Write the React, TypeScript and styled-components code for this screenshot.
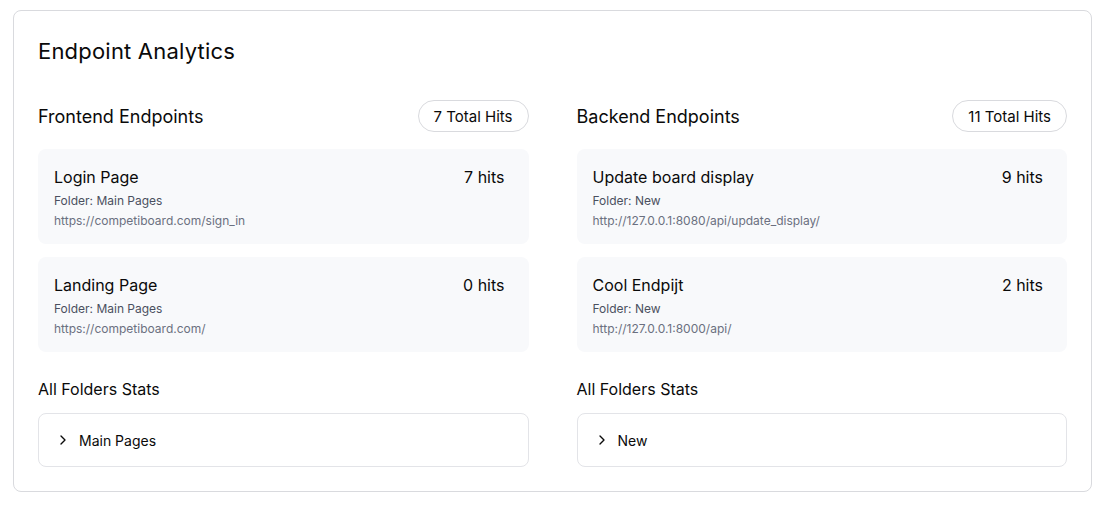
import React from "react";
import styled, { createGlobalStyle } from "styled-components";

const Global = createGlobalStyle`
  html, body { margin: 0; padding: 0; background: #ffffff; }
  body { font-family: Inter, "Noto Sans", sans-serif; color: #0a0a0a; -webkit-font-smoothing: antialiased; }
  * { box-sizing: border-box; }
`;

const Page = styled.div`
  padding: 10px 18px 14px 13px;
`;

const Panel = styled.section`
  border: 1px solid #d9dade;
  border-radius: 8px;
  background: #fff;
  padding: 24px;
`;

const Title = styled.h1`
  margin: 0 0 32px 0;
  font-size: 22px;
  line-height: 33px;
  font-weight: 400;
  letter-spacing: 0.2px;
  color: #0a0a0a;
`;

const Columns = styled.div`
  display: grid;
  grid-template-columns: 1fr 1fr;
  column-gap: 48px;
`;

const Column = styled.div`
  display: flex;
  flex-direction: column;
`;

const SectionHeader = styled.div`
  display: flex;
  align-items: center;
  justify-content: space-between;
  height: 32px;
  margin-bottom: 17px;
`;

const SectionTitle = styled.h2`
  margin: 0;
  font-size: 18px;
  font-weight: 400;
  color: #0a0a0a;
`;

const Badge = styled.span`
  display: inline-flex;
  align-items: center;
  height: 32px;
  padding: 0 15px;
  border: 1px solid #d9dade;
  border-radius: 999px;
  font-size: 15px;
  color: #0a0a0a;
`;

const List = styled.div`
  display: flex;
  flex-direction: column;
  gap: 13px;
`;

const Item = styled.div`
  display: flex;
  justify-content: space-between;
  align-items: flex-start;
  background: #f8f9fb;
  border-radius: 8px;
  padding: 18px 24px 16px 16px;
  height: 95px;
`;

const ItemInfo = styled.div`
  display: flex;
  flex-direction: column;
`;

const ItemName = styled.div`
  font-size: 16px;
  line-height: 20px;
  color: #0a0a0a;
`;

const ItemFolder = styled.div`
  margin-top: 5px;
  font-size: 12px;
  line-height: 18px;
  color: #4b5060;
`;

const ItemUrl = styled.div`
  margin-top: 2px;
  font-size: 12px;
  line-height: 18px;
  color: #6b7080;
`;

const Hits = styled.div`
  font-size: 16px;
  line-height: 20px;
  color: #0a0a0a;
`;

const StatsTitle = styled.h3`
  margin: 27px 0 14px 0;
  font-size: 16px;
  line-height: 20px;
  font-weight: 400;
  color: #0a0a0a;
`;

const Accordion = styled.div`
  border: 1px solid #e3e4e8;
  border-radius: 8px;
  height: 54px;
  display: flex;
  align-items: center;
  padding: 0 16px;
  gap: 8px;
  font-size: 14px;
  color: #0a0a0a;
`;

const Chevron = styled.svg`
  width: 16px;
  height: 16px;
  flex: none;
`;

type Endpoint = { name: string; folder: string; url: string; hits: number };

const sections: { title: string; total: number; items: Endpoint[]; folders: string[] }[] = [
  {
    title: "Frontend Endpoints",
    total: 7,
    items: [
      { name: "Login Page", folder: "Main Pages", url: "https://competiboard.com/sign_in", hits: 7 },
      { name: "Landing Page", folder: "Main Pages", url: "https://competiboard.com/", hits: 0 },
    ],
    folders: ["Main Pages"],
  },
  {
    title: "Backend Endpoints",
    total: 11,
    items: [
      { name: "Update board display", folder: "New", url: "http://127.0.0.1:8080/api/update_display/", hits: 9 },
      { name: "Cool Endpijt", folder: "New", url: "http://127.0.0.1:8000/api/", hits: 2 },
    ],
    folders: ["New"],
  },
];

export default function App() {
  return (
    <>
      <Global />
      <Page>
        <Panel>
          <Title>Endpoint Analytics</Title>
          <Columns>
            {sections.map((s) => (
              <Column key={s.title}>
                <SectionHeader>
                  <SectionTitle>{s.title}</SectionTitle>
                  <Badge>{s.total} Total Hits</Badge>
                </SectionHeader>
                <List>
                  {s.items.map((it) => (
                    <Item key={it.name}>
                      <ItemInfo>
                        <ItemName>{it.name}</ItemName>
                        <ItemFolder>Folder: {it.folder}</ItemFolder>
                        <ItemUrl>{it.url}</ItemUrl>
                      </ItemInfo>
                      <Hits>{it.hits} hits</Hits>
                    </Item>
                  ))}
                </List>
                <StatsTitle>All Folders Stats</StatsTitle>
                {s.folders.map((f) => (
                  <Accordion key={f}>
                    <Chevron viewBox="0 0 24 24" fill="none" stroke="currentColor" strokeWidth={2} strokeLinecap="round" strokeLinejoin="round">
                      <path d="m9 18 6-6-6-6" />
                    </Chevron>
                    {f}
                  </Accordion>
                ))}
              </Column>
            ))}
          </Columns>
        </Panel>
      </Page>
    </>
  );
}
